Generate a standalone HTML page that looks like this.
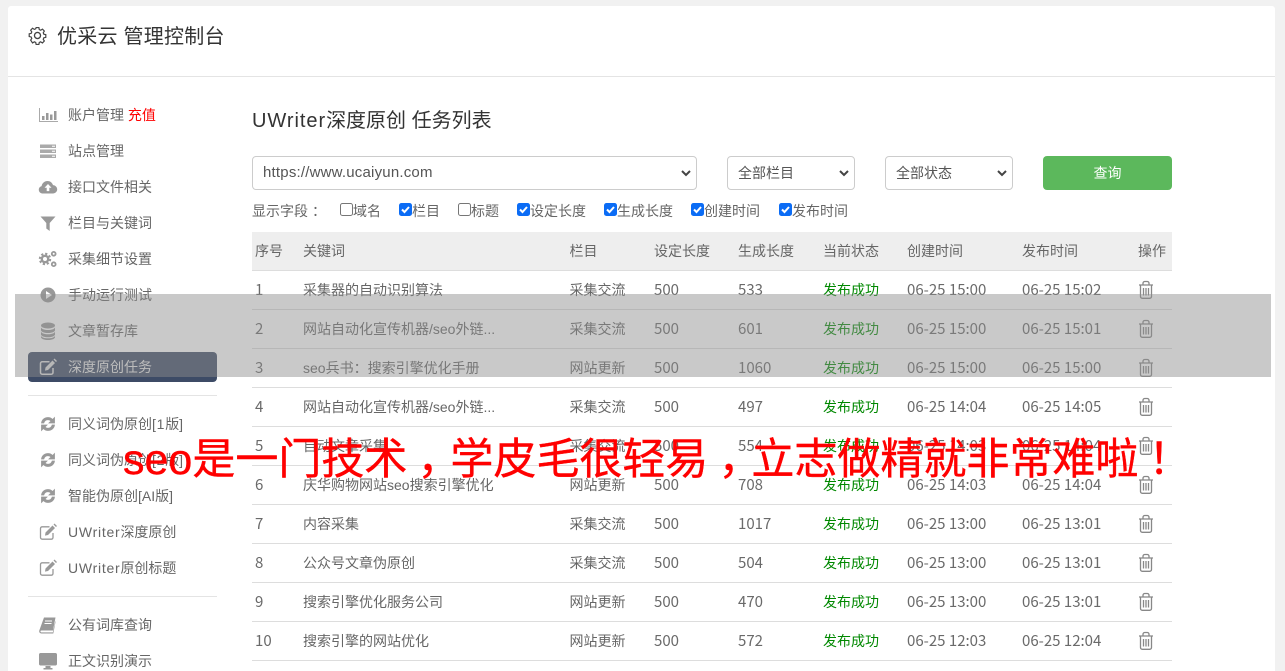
<!DOCTYPE html>
<html lang="zh"><head><meta charset="utf-8"><title>优采云 管理控制台</title>
<style>
html,body{margin:0;padding:0;width:1285px;height:671px;overflow:hidden;background:#f1f1f1;}
body{position:relative;font:14px/20px "Liberation Sans","Noto Sans CJK SC",sans-serif;color:#666;}
.a{position:absolute;white-space:nowrap;}
#panel{position:absolute;left:8px;top:6px;width:1267px;height:665px;background:#fff;border-radius:3px 3px 0 0;}
.hl{position:absolute;background:#e4e4e4;height:1px;}
.m{position:absolute;left:68px;white-space:nowrap;font-size:14px;line-height:20px;}
.m b{font-weight:normal;letter-spacing:.75px;}
.ic{position:absolute;left:38px;width:20px;height:20px;fill:#999;}
.sel{position:absolute;top:156px;height:34px;box-sizing:border-box;border:1px solid #ccc;border-radius:4px;background:#fff;line-height:32px;padding-left:10px;font-size:14px;color:#555;}
.sel svg{position:absolute;right:5px;top:12px;width:10px;height:8px;}
.cb{position:absolute;top:203px;width:13px;height:13px;box-sizing:border-box;border-radius:2.5px;}
.on{background:#0b6cf5;}
.off{border:1px solid #767676;background:#fff;}
.on svg{position:absolute;left:2px;top:2px;width:9px;height:9px;}
.f{position:absolute;top:201px;white-space:nowrap;font-size:14px;}
.r{position:absolute;left:252px;width:920px;height:39px;border-bottom:1px solid #ddd;box-sizing:border-box;}
.r span{position:absolute;top:9px;white-space:nowrap;line-height:20px;}
.r .n{font-family:"Noto Sans CJK SC","Liberation Sans",sans-serif;font-size:15px;color:#6a6a6a;}
.g{color:#080;}
.r svg{position:absolute;left:885px;top:9px;width:18px;height:20px;}
.c1{left:3px}.c2{left:51px}.c3{left:317.500px}.c4{left:402px}.c5{left:486px}.c6{left:571px}.c7{left:655px}.c8{left:770px}.c9{left:886px}
</style></head><body>
<svg width="0" height="0" style="position:absolute"><defs>
<symbol id="tr" viewBox="0 0 18 20"><path d="M2 5h14M6 5V3.200C6 2.200 6.800 1.500 7.800 1.500h2.400C11.200 1.500 12 2.200 12 3.200V5M3.500 5v11.500c0 1 .8 1.800 1.800 1.800h7.400c1 0 1.800-.8 1.800-1.800V5M6.500 8v7.500M9 8v7.500M11.500 8v7.500" fill="none" stroke="#888" stroke-width="1.300"/></symbol>
<symbol id="ed" viewBox="0 0 20 20"><path d="M15 11v4.500c0 1-.8 1.700-1.700 1.700H4.200c-1 0-1.700-.8-1.700-1.700V6.500c0-1 .8-1.700 1.700-1.700h7.300" fill="none" stroke="#999" stroke-width="1.300"/><path d="M7.500 10.500L14.500 3.500l2.500 2.500-7 7-3 .6zM15.500 2.500l1-1 2.500 2.500-1 1z"/></symbol>
<symbol id="sy" viewBox="0 0 20 20"><path d="M3.500 9C4 5.500 6.800 3.500 10 3.500c2 0 3.500.8 4.600 2L16.500 3.600V9H11l2-2c-.8-.9-1.800-1.300-3-1.300-2 0-3.700 1.300-4.200 3.300zM16.500 11c-.5 3.500-3.300 5.500-6.500 5.500-2 0-3.500-.8-4.600-2l-1.900 1.900V11H9l-2 2c.8.900 1.800 1.300 3 1.300 2 0 3.700-1.300 4.200-3.300z" stroke="#999" stroke-width=".8"/></symbol>
</defs></svg>
<div id="panel"></div>
<div class="hl" style="left:8px;top:76px;width:1267px;"></div>

<svg class="a" style="left:28px;top:26px;width:19px;height:19px;" viewBox="0 0 20 20"><path d="M8.400 1.500h3.200l.5 2.400 1.600.7 2.100-1.300 2.200 2.300-1.300 2 .7 1.700 2.300.5v3.200l-2.300.5-.7 1.700 1.300 2-2.200 2.300-2.100-1.300-1.600.7-.5 2.300H8.400l-.5-2.300-1.600-.7-2.100 1.300L2 16.200l1.300-2-.7-1.700-2.300-.5V8.800l2.300-.5.700-1.700-1.300-2 2.200-2.300 2.100 1.300 1.600-.7z" transform="translate(1 0.300) scale(.9)" fill="none" stroke="#444" stroke-width="1.400"/><circle cx="10" cy="10" r="3.200" fill="none" stroke="#444" stroke-width="1.400"/></svg>
<div class="a" style="left:57px;top:24px;font-size:20px;line-height:26px;color:#333;letter-spacing:.25px;">优采云 管理控制台</div>

<svg class="ic" style="top:105px;" viewBox="0 0 20 20"><path d="M1 3h1v13h18v1H1z" fill="#aaa"/><path d="M4 11h2.500v4H4zM8 8h2.500v7H8zM12 9.500h2.500V15H12zM16 6h2.500v9H16z"/></svg>
<div class="m" style="top:105px;">账户管理 <span style="color:#f00;">充值</span></div>
<svg class="ic" style="top:141px;" viewBox="0 0 20 20"><path d="M2 3.500h16v3.500H2zM2 8.500h16v3.500H2zM2 13.500h16V17H2z" fill="#aaa"/><path d="M14 4.700h3v1h-3zM14 9.700h3v1h-3zM14 14.700h3v1h-3z" fill="#fff"/></svg>
<div class="m" style="top:141px;">站点管理</div>
<svg class="ic" style="top:177px;" viewBox="0 0 20 20"><path d="M5 16.500c-2.500 0-4.200-1.700-4.200-3.800 0-1.800 1.200-3.200 2.800-3.600C4 6.300 6.500 4 9.500 4c2.600 0 4.800 1.700 5.500 4.100 2.400.2 4.200 2 4.200 4.300 0 2.300-1.900 4.100-4.300 4.100z"/><path d="M10 7l3.500 3.800h-2.200v3.300H8.700v-3.300H6.500z" fill="#fff"/></svg>
<div class="m" style="top:177px;">接口文件相关</div>
<svg class="ic" style="top:213px;" viewBox="0 0 20 20"><path d="M2.500 3.500h15l-5.800 6.500v8l-3.400-2.500V10z"/></svg>
<div class="m" style="top:213px;">栏目与关键词</div>
<svg class="ic" style="top:249px;" viewBox="0 0 20 20"><circle cx="7" cy="10" r="3.200" fill="none" stroke="#999" stroke-width="2.400"/><circle cx="7" cy="10" r="5.200" fill="none" stroke="#999" stroke-width="2" stroke-dasharray="2.200 1.880"/><circle cx="15.700" cy="4.800" r="1.900" fill="none" stroke="#999" stroke-width="1.800"/><circle cx="15.700" cy="15.200" r="1.900" fill="none" stroke="#999" stroke-width="1.800"/></svg>
<div class="m" style="top:249px;">采集细节设置</div>
<svg class="ic" style="top:285px;" viewBox="0 0 20 20"><circle cx="10" cy="10" r="7.500"/><path d="M8 6l6 4-6 4z" fill="#fff"/></svg>
<div class="m" style="top:285px;">手动运行测试</div>
<svg class="ic" style="top:321px;" viewBox="0 0 20 20"><ellipse cx="10" cy="4.500" rx="7" ry="3"/><path d="M3 6.500c1 1.800 3.500 2.500 7 2.500s6-.7 7-2.500V9.500c-1 1.800-3.500 2.500-7 2.500s-6-.7-7-2.500zM3 10.800c1 1.800 3.500 2.500 7 2.500s6-.7 7-2.500v3c-1 1.800-3.500 2.500-7 2.500s-6-.7-7-2.500z"/><path d="M3 15c1 1.600 3.500 2.300 7 2.300s6-.7 7-2.300v1.500c-1 1.800-3.500 2.500-7 2.500s-6-.7-7-2.500z"/></svg>
<div class="m" style="top:321px;">文章暂存库</div>

<div class="a" style="left:28px;top:352px;width:189px;height:30px;background:#3d4b66;border-radius:4px;"></div>
<svg class="ic" style="top:357px;fill:#ddd;" viewBox="0 0 20 20"><path d="M15 11v4.500c0 1-.8 1.700-1.700 1.700H4.200c-1 0-1.700-.8-1.700-1.700V6.500c0-1 .8-1.700 1.700-1.700h7.300" fill="none" stroke="#ddd" stroke-width="1.500"/><path d="M7.500 10.500L14.500 3.500l2.500 2.500-7 7-3 .6zM15.500 2.500l1-1 2.500 2.500-1 1z"/></svg>
<div class="m" style="top:357px;color:#e6e6e6;">深度原创任务</div>

<div class="hl" style="left:28px;top:395px;width:189px;"></div>
<svg class="ic" style="top:414px;"><use href="#sy"/></svg>
<div class="m" style="top:414px;">同义词伪原创<b>[1</b>版]</div>
<svg class="ic" style="top:450px;"><use href="#sy"/></svg>
<div class="m" style="top:450px;">同义词伪原创<b>[2</b>版]</div>
<svg class="ic" style="top:486px;"><use href="#sy"/></svg>
<div class="m" style="top:486px;">智能伪原创[AI版]</div>
<svg class="ic" style="top:522px;"><use href="#ed"/></svg>
<div class="m" style="top:522px;"><b>UWriter</b>深度原创</div>
<svg class="ic" style="top:558px;"><use href="#ed"/></svg>
<div class="m" style="top:558px;"><b>UWriter</b>原创标题</div>
<div class="hl" style="left:28px;top:596px;width:189px;"></div>
<svg class="ic" style="top:615px;" viewBox="0 0 20 20"><path d="M6 2.500h11.500L15 15.500H3.500c-.8 0-1.200.5-1 1.100.2.500.6.800 1.200.800h11.100l2.700-12v1.600l-2.200 11.500H3.500c-1.500 0-2.500-1-2.300-2.700z"/><path d="M7 6h7M6.500 8.500h7" stroke="#fff" stroke-width="1"/></svg>
<div class="m" style="top:615px;">公有词库查询</div>
<svg class="ic" style="top:651px;" viewBox="0 0 20 20"><path d="M2.500 2h15c.8 0 1.500.7 1.500 1.500V13c0 .8-.7 1.500-1.500 1.500h-15C1.700 14.500 1 13.800 1 13V3.500C1 2.700 1.700 2 2.500 2zM7.500 15h5v2h2v1.500h-9V17h2z"/></svg>
<div class="m" style="top:651px;">正文识别演示</div>

<div class="a" style="left:252px;top:107px;font-size:20px;line-height:28px;color:#333;"><span style="letter-spacing:.95px;">UWriter</span>深度原创 任务列表</div>

<div class="sel" style="left:252px;width:445px;font-size:15px;letter-spacing:.2px;">https://www.ucaiyun.com<svg viewBox="0 0 10 8"><path d="M1 2l4 4 4-4" fill="none" stroke="#444" stroke-width="2"/></svg></div>
<div class="sel" style="left:727px;width:128px;">全部栏目<svg viewBox="0 0 10 8"><path d="M1 2l4 4 4-4" fill="none" stroke="#444" stroke-width="2"/></svg></div>
<div class="sel" style="left:885px;width:128px;">全部状态<svg viewBox="0 0 10 8"><path d="M1 2l4 4 4-4" fill="none" stroke="#444" stroke-width="2"/></svg></div>
<div class="a" style="left:1043px;top:156px;width:129px;height:34px;background:#5cb85c;border-radius:4px;color:#fff;text-align:center;line-height:34px;">查询</div>

<div class="f" style="left:252px;">显示字段<span style="position:relative;left:4px;">：</span></div>
<div class="cb off" style="left:340px;"></div><div class="f" style="left:353px;">域名</div>
<div class="cb on" style="left:399px;"><svg viewBox="0 0 9 9"><path d="M1 4.500l2.500 2.500L8 2" fill="none" stroke="#fff" stroke-width="2"/></svg></div><div class="f" style="left:412px;">栏目</div>
<div class="cb off" style="left:458px;"></div><div class="f" style="left:471px;">标题</div>
<div class="cb on" style="left:517px;"><svg viewBox="0 0 9 9"><path d="M1 4.500l2.500 2.500L8 2" fill="none" stroke="#fff" stroke-width="2"/></svg></div><div class="f" style="left:530px;">设定长度</div>
<div class="cb on" style="left:604px;"><svg viewBox="0 0 9 9"><path d="M1 4.500l2.500 2.500L8 2" fill="none" stroke="#fff" stroke-width="2"/></svg></div><div class="f" style="left:617px;">生成长度</div>
<div class="cb on" style="left:691px;"><svg viewBox="0 0 9 9"><path d="M1 4.500l2.500 2.500L8 2" fill="none" stroke="#fff" stroke-width="2"/></svg></div><div class="f" style="left:704px;">创建时间</div>
<div class="cb on" style="left:779px;"><svg viewBox="0 0 9 9"><path d="M1 4.500l2.500 2.500L8 2" fill="none" stroke="#fff" stroke-width="2"/></svg></div><div class="f" style="left:792px;">发布时间</div>

<div class="r" style="top:232px;background:#eee;"><span class="c1">序号</span><span class="c2">关键词</span><span class="c3">栏目</span><span class="c4">设定长度</span><span class="c5">生成长度</span><span class="c6">当前状态</span><span class="c7">创建时间</span><span class="c8">发布时间</span><span class="c9">操作</span></div>
<div class="r" style="top:271px;"><span class="c1 n">1</span><span class="c2">采集器的自动识别算法</span><span class="c3">采集交流</span><span class="c4 n">500</span><span class="c5 n">533</span><span class="c6 g">发布成功</span><span class="c7 n">06-25 15:00</span><span class="c8 n">06-25 15:02</span><svg><use href="#tr"/></svg></div>
<div class="r" style="top:310px;"><span class="c1 n">2</span><span class="c2">网站自动化宣传机器/seo外链...</span><span class="c3">采集交流</span><span class="c4 n">500</span><span class="c5 n">601</span><span class="c6 g">发布成功</span><span class="c7 n">06-25 15:00</span><span class="c8 n">06-25 15:01</span><svg><use href="#tr"/></svg></div>
<div class="r" style="top:349px;"><span class="c1 n">3</span><span class="c2">seo兵书：搜索引擎优化手册</span><span class="c3">网站更新</span><span class="c4 n">500</span><span class="c5 n">1060</span><span class="c6 g">发布成功</span><span class="c7 n">06-25 15:00</span><span class="c8 n">06-25 15:00</span><svg><use href="#tr"/></svg></div>
<div class="r" style="top:388px;"><span class="c1 n">4</span><span class="c2">网站自动化宣传机器/seo外链...</span><span class="c3">采集交流</span><span class="c4 n">500</span><span class="c5 n">497</span><span class="c6 g">发布成功</span><span class="c7 n">06-25 14:04</span><span class="c8 n">06-25 14:05</span><svg><use href="#tr"/></svg></div>
<div class="r" style="top:427px;"><span class="c1 n">5</span><span class="c2">自动文章采集</span><span class="c3">采集交流</span><span class="c4 n">500</span><span class="c5 n">554</span><span class="c6 g">发布成功</span><span class="c7 n">06-25 14:03</span><span class="c8 n">06-25 14:04</span><svg><use href="#tr"/></svg></div>
<div class="r" style="top:466px;"><span class="c1 n">6</span><span class="c2">庆华购物网站seo搜索引擎优化</span><span class="c3">网站更新</span><span class="c4 n">500</span><span class="c5 n">708</span><span class="c6 g">发布成功</span><span class="c7 n">06-25 14:03</span><span class="c8 n">06-25 14:04</span><svg><use href="#tr"/></svg></div>
<div class="r" style="top:505px;"><span class="c1 n">7</span><span class="c2">内容采集</span><span class="c3">采集交流</span><span class="c4 n">500</span><span class="c5 n">1017</span><span class="c6 g">发布成功</span><span class="c7 n">06-25 13:00</span><span class="c8 n">06-25 13:01</span><svg><use href="#tr"/></svg></div>
<div class="r" style="top:544px;"><span class="c1 n">8</span><span class="c2">公众号文章伪原创</span><span class="c3">采集交流</span><span class="c4 n">500</span><span class="c5 n">504</span><span class="c6 g">发布成功</span><span class="c7 n">06-25 13:00</span><span class="c8 n">06-25 13:01</span><svg><use href="#tr"/></svg></div>
<div class="r" style="top:583px;"><span class="c1 n">9</span><span class="c2">搜索引擎优化服务公司</span><span class="c3">网站更新</span><span class="c4 n">500</span><span class="c5 n">470</span><span class="c6 g">发布成功</span><span class="c7 n">06-25 13:00</span><span class="c8 n">06-25 13:01</span><svg><use href="#tr"/></svg></div>
<div class="r" style="top:622px;"><span class="c1 n">10</span><span class="c2">搜索引擎的网站优化</span><span class="c3">网站更新</span><span class="c4 n">500</span><span class="c5 n">572</span><span class="c6 g">发布成功</span><span class="c7 n">06-25 12:03</span><span class="c8 n">06-25 12:04</span><svg><use href="#tr"/></svg></div>

<div class="a" style="left:15px;top:294px;width:1256px;height:83px;background:rgba(141,141,141,.474);"></div>
<div class="a" style="left:123px;top:432px;font-size:43px;line-height:56px;color:#f00;-webkit-text-stroke:.4px #f00;">seo是一门技术<span style="position:relative;left:10px;">，</span>学皮毛很轻易<span style="position:relative;left:10px;">，</span>立志做精就非常难啦<span style="position:relative;left:10px;">！</span></div>
</body></html>
